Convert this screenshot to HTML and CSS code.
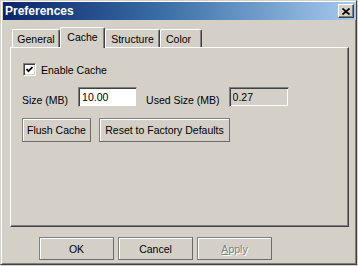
FILE: index.html
```html
<!DOCTYPE html>
<html lang="en">
<head>
    <meta charset="UTF-8">
    <meta name="viewport" content="width=device-width, initial-scale=1.0">
    <title>Preferences</title>
    <link rel="stylesheet" href="styles.css">
</head>
<body>
    <div class="window">
        <div class="titlebar">
            <span class="title">Preferences</span>
            <button class="close-button" type="button">
                <svg width="8" height="7" viewBox="0 0 8 7"><path d="M0.5 0.5 L7.5 6.5 M7.5 0.5 L0.5 6.5" stroke="#000" stroke-width="1.7" fill="none"/></svg>
            </button>
        </div>

        <div class="tabs">
            <div class="tab tab_general">General</div>
            <div class="tab tab_cache active">Cache</div>
            <div class="tab tab_structure">Structure</div>
            <div class="tab tab_color">Color</div>
        </div>

        <div class="panel">
            <div class="check-row">
                <span class="checkbox">
                    <svg width="7" height="7" viewBox="0 0 7 7"><polyline points="0.5,3 2.5,5.2 6.5,1" stroke="#000" stroke-width="1.8" fill="none"/></svg>
                </span>
                <span>Enable Cache</span>
            </div>
            <div class="field-row">
                <span class="field-label">Size (MB)</span>
                <input class="text-input size_input" type="text" value="10.00">
                <span class="field-label used_label">Used Size (MB)</span>
                <input class="text-input used_input" type="text" value="0.27" disabled>
            </div>
            <div class="button-row">
                <button class="btn flush_button" type="button">Flush Cache</button>
                <button class="btn reset_button" type="button">Reset to Factory Defaults</button>
            </div>
        </div>

        <div class="dialog-buttons">
            <button class="btn dialog_button" type="button">OK</button>
            <button class="btn dialog_button" type="button">Cancel</button>
            <button class="btn dialog_button disabled" type="button"><u>A</u>pply</button>
        </div>
    </div>
</body>
</html>
```

FILE: styles.css
```css
html, body {
    margin: 0;
    padding: 0;
    background-color: #d4d0c8;
}
body {
    font-family: "Liberation Sans", Arial, sans-serif;
    font-size: 10.5px;
    color: #000;
}
.window {
    box-sizing: border-box;
    width: 357px;
    height: 265px;
    padding: 1px 0 2px 2px;
    border: 1px solid;
    border-color: #d4d0c8 #404040 #404040 #d4d0c8;
    box-shadow: inset 1px 1px #fff, inset -1px -1px #808080;
    background-color: #d4d0c8;
}
.titlebar {
    display: flex;
    align-items: center;
    justify-content: space-between;
    height: 18px;
    padding: 0 2px 0 2px;
    background: linear-gradient(to right, #0a246a 0%, #3a6ea5 45%, #a6caf0 100%);
}
.title {
    color: #fff;
    font-weight: bold;
    font-size: 12px;
}
.close-button {
    display: flex;
    align-items: center;
    justify-content: center;
    box-sizing: border-box;
    width: 16px;
    height: 14px;
    padding: 0;
    border: 1px solid;
    border-color: #fff #404040 #404040 #fff;
    box-shadow: inset -1px -1px #808080;
    background-color: #d4d0c8;
}

.tabs {
    display: flex;
    align-items: flex-end;
    height: 20px;
    margin: 7px 0 0 9px;
}
.tab {
    box-sizing: border-box;
    height: 18px;
    display: flex;
    align-items: center;
    justify-content: center;
    padding-top: 1px;
    border-top: 1px solid #fff;
    border-left: 1px solid #fff;
    border-right: 1px solid #404040;
    border-radius: 2px 2px 0 0;
    box-shadow: inset -1px 0 #808080;
    background-color: #d4d0c8;
}
.tab_general {
    width: 48px;
}
.tab_cache {
    width: 45px;
}
.tab_structure {
    width: 55px;
}
.tab_color {
    width: 42px;
    padding-right: 5px;
}
.tab.active {
    position: relative;
    z-index: 1;
    height: 21px;
    margin-bottom: -1px;
    padding-top: 0;
    padding-bottom: 3px;
}

.panel {
    box-sizing: border-box;
    width: 339px;
    height: 180px;
    margin-left: 7px;
    padding: 15px 11px 0 11px;
    border: 1px solid;
    border-color: #fff #404040 #404040 #fff;
    box-shadow: inset -1px -1px #808080;
}
.check-row {
    display: flex;
    align-items: center;
    height: 13px;
}
.checkbox {
    box-sizing: border-box;
    display: flex;
    align-items: center;
    justify-content: center;
    width: 13px;
    height: 13px;
    margin: 0 5px 0 1px;
    border: 1px solid;
    border-color: #808080 #fff #fff #808080;
    box-shadow: inset 1px 1px #404040, inset -1px -1px #d4d0c8;
    background-color: #fff;
}

.field-row {
    display: flex;
    align-items: center;
    margin-top: 11px;
    height: 20px;
}
.field-label {
    padding-top: 6px;
}
.text-input {
    box-sizing: border-box;
    height: 20px;
    padding: 0 3px;
    margin: 0;
    font-family: "Liberation Sans", Arial, sans-serif;
    font-size: 10.5px;
    color: #000;
    border: 1px solid;
    border-color: #808080 #d4d0c8 #d4d0c8 #808080;
    box-shadow: inset 1px 1px #404040, inset -1px -1px #fff;
    background-color: #fff;
    outline: none;
}
.size_input {
    width: 59px;
    margin-left: 10px;
}
.used_label {
    margin-left: 9px;
}
.used_input {
    width: 60px;
    margin-left: 9px;
    background-color: #d4d0c8;
    color: #000;
    -webkit-text-fill-color: #000;
}

.button-row {
    display: flex;
    gap: 8px;
    margin-top: 11px;
}
.btn {
    box-sizing: border-box;
    height: 24px;
    padding: 0;
    font-family: "Liberation Sans", Arial, sans-serif;
    font-size: 10.5px;
    color: #000;
    border: 1px solid #808080;
    border-right-color: #6a6a6a;
    border-bottom-color: #6a6a6a;
    box-shadow: inset 1px 1px #fff;
    background-color: #d4d0c8;
}
.flush_button {
    width: 69px;
}
.reset_button {
    width: 131px;
}

.dialog-buttons {
    display: flex;
    gap: 4px;
    margin: 10px 0 0 36px;
}
.dialog_button {
    width: 75px;
    height: 23px;
}
.dialog_button.disabled {
    color: #808080;
    text-shadow: 1px 1px #fff;
}
```
